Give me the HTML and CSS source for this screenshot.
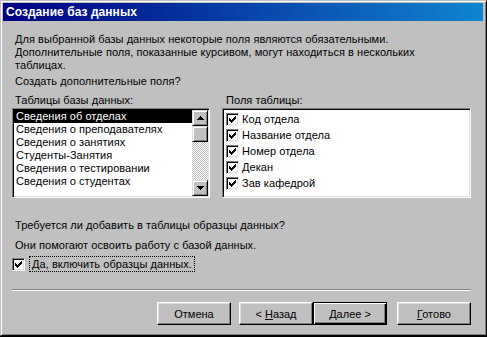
FILE: index.html
```html
<!DOCTYPE html>
<html lang="ru">
<head>
  <meta charset="UTF-8" />
  <title>Создание баз данных</title>
  <link rel="stylesheet" href="styles.css">
</head>
<body>
  <div class="window">
    <div class="titlebar">Создание баз данных</div>

    <div class="content">
      <p class="intro">Для выбранной базы данных некоторые поля являются обязательными.<br>Дополнительные поля, показанные курсивом, могут находиться в нескольких<br>таблицах.</p>
      <p class="question">Создать дополнительные поля?</p>

      <div class="lists">
        <div class="group tables">
          <div class="label">Таблицы базы данных:</div>
          <div class="listbox">
            <ul class="items">
              <li class="selected">Сведения об отделах</li>
              <li>Сведения о преподавателях</li>
              <li>Сведения о занятиях</li>
              <li>Студенты-Занятия</li>
              <li>Сведения о тестировании</li>
              <li>Сведения о студентах</li>
            </ul>
            <div class="scrollbar">
              <div class="sb-btn">
                <svg width="7" height="4" viewBox="0 0 7 4" shape-rendering="crispEdges"><path d="M3 0h1v1h-1z M2 1h3v1h-3z M1 2h5v1h-5z M0 3h7v1h-7z" fill="#000"/></svg>
              </div>
              <div class="sb-thumb"></div>
              <div class="sb-track"></div>
              <div class="sb-btn">
                <svg width="7" height="4" viewBox="0 0 7 4" shape-rendering="crispEdges"><path d="M0 0h7v1h-7z M1 1h5v1h-5z M2 2h3v1h-3z M3 3h1v1h-1z" fill="#000"/></svg>
              </div>
            </div>
          </div>
        </div>

        <div class="group fields">
          <div class="label">Поля таблицы:</div>
          <div class="listbox">
            <div class="check-row"><span class="check"><svg width="7" height="7" viewBox="0 0 7 7" shape-rendering="crispEdges"><path d="M6 0h1v1h-1z M5 1h2v1h-2z M0 2h1v1h-1z M4 2h3v1h-3z M0 3h2v1h-2z M3 3h3v1h-3z M0 4h5v1h-5z M1 5h3v1h-3z M2 6h1v1h-1z" fill="#000"/></svg></span>Код отдела</div>
            <div class="check-row"><span class="check"><svg width="7" height="7" viewBox="0 0 7 7" shape-rendering="crispEdges"><path d="M6 0h1v1h-1z M5 1h2v1h-2z M0 2h1v1h-1z M4 2h3v1h-3z M0 3h2v1h-2z M3 3h3v1h-3z M0 4h5v1h-5z M1 5h3v1h-3z M2 6h1v1h-1z" fill="#000"/></svg></span>Название отдела</div>
            <div class="check-row"><span class="check"><svg width="7" height="7" viewBox="0 0 7 7" shape-rendering="crispEdges"><path d="M6 0h1v1h-1z M5 1h2v1h-2z M0 2h1v1h-1z M4 2h3v1h-3z M0 3h2v1h-2z M3 3h3v1h-3z M0 4h5v1h-5z M1 5h3v1h-3z M2 6h1v1h-1z" fill="#000"/></svg></span>Номер отдела</div>
            <div class="check-row"><span class="check"><svg width="7" height="7" viewBox="0 0 7 7" shape-rendering="crispEdges"><path d="M6 0h1v1h-1z M5 1h2v1h-2z M0 2h1v1h-1z M4 2h3v1h-3z M0 3h2v1h-2z M3 3h3v1h-3z M0 4h5v1h-5z M1 5h3v1h-3z M2 6h1v1h-1z" fill="#000"/></svg></span>Декан</div>
            <div class="check-row"><span class="check"><svg width="7" height="7" viewBox="0 0 7 7" shape-rendering="crispEdges"><path d="M6 0h1v1h-1z M5 1h2v1h-2z M0 2h1v1h-1z M4 2h3v1h-3z M0 3h2v1h-2z M3 3h3v1h-3z M0 4h5v1h-5z M1 5h3v1h-3z M2 6h1v1h-1z" fill="#000"/></svg></span>Зав кафедрой</div>
          </div>
        </div>
      </div>

      <p class="sample-q">Требуется ли добавить в таблицы образцы данных?</p>
      <p class="sample-note">Они помогают освоить работу с базой данных.</p>
      <div class="sample-row">
        <span class="check"><svg width="7" height="7" viewBox="0 0 7 7" shape-rendering="crispEdges"><path d="M6 0h1v1h-1z M5 1h2v1h-2z M0 2h1v1h-1z M4 2h3v1h-3z M0 3h2v1h-2z M3 3h3v1h-3z M0 4h5v1h-5z M1 5h3v1h-3z M2 6h1v1h-1z" fill="#000"/></svg></span>
        <span class="focus">Да, включить образцы данных.</span>
      </div>

      <div class="separator"></div>

      <div class="buttons">
        <button class="btn cancel">Отмена</button>
        <button class="btn">&lt; <u>Н</u>азад</button>
        <button class="btn default"><u>Д</u>алее &gt;</button>
        <button class="btn finish"><u>Г</u>отово</button>
      </div>
    </div>
  </div>
</body>
</html>
```

FILE: styles.css
```css
body {
  margin: 0;
  background: #000;
  font-family: 'Liberation Sans', Arial, sans-serif;
  font-size: 11px;
  line-height: 13px;
  letter-spacing: 0.05px;
  color: #000;
}
.window {
  box-sizing: border-box;
  width: 487px;
  height: 336px;
  background: #c0c0c0;
  border: 1px solid;
  border-color: #c0c0c0 #000 #000 #c0c0c0;
  box-shadow: inset 1px 1px #fff, inset -1px -1px #808080;
  padding: 2px 3px 0 2px;
}
.titlebar {
  height: 18px;
  line-height: 18px;
  padding-left: 3px;
  background: linear-gradient(90deg, #000080, #1084d0);
  color: #fff;
  font-weight: bold;
  font-size: 12px;
}
.content {
  padding: 0 12px 0 9px;
}
p {
  margin: 0;
  padding-left: 3px;
}
.intro {
  margin-top: 12px;
}
.question {
  margin-top: 3px;
}

/* two lists */
.lists {
  display: flex;
  gap: 12px;
  margin-top: 6px;
}
.label {
  padding-left: 3px;
  margin-bottom: 1px;
}
.tables {
  width: 198px;
}
.fields {
  flex: 1;
}
.fields .label {
  padding-left: 4px;
}
.listbox {
  box-sizing: border-box;
  height: 90px;
  background: #fff;
  border: 1px solid;
  border-color: #808080 #fff #fff #808080;
  box-shadow: inset 1px 1px #000, inset -1px -1px #dfdfdf;
  padding: 1px;
}
.tables .listbox {
  display: flex;
}
.items {
  list-style: none;
  margin: 0;
  padding: 0;
  flex: 1;
}
.items li {
  height: 13px;
  padding-left: 2px;
}
.items li.selected {
  background: #000;
  color: #fff;
}
.scrollbar {
  width: 16px;
  display: flex;
  flex-direction: column;
}
.sb-btn, .sb-thumb {
  box-sizing: border-box;
  width: 16px;
  height: 16px;
  background: #c0c0c0;
  border: 1px solid;
  border-color: #dfdfdf #000 #000 #dfdfdf;
  box-shadow: inset 1px 1px #fff, inset -1px -1px #808080;
  display: flex;
  align-items: center;
  justify-content: center;
}
.sb-btn svg {
  display: block;
}
.sb-track {
  flex: 1;
  background: repeating-conic-gradient(#fff 0 25%, #c0c0c0 0 50%) 0 0 / 2px 2px;
}

/* checkboxes */
.check {
  box-sizing: border-box;
  width: 13px;
  height: 13px;
  flex: none;
  background: #fff;
  border: 1px solid;
  border-color: #808080 #fff #fff #808080;
  box-shadow: inset 1px 1px #000, inset -1px -1px #dfdfdf;
  padding: 2px 0 0 2px;
}
.check svg {
  display: block;
}
.fields .listbox {
  padding: 2px 2px 0 2px;
}
.check-row {
  display: flex;
  align-items: center;
  gap: 3px;
  height: 16px;
  padding-left: 1px;
}

/* sample data */
.sample-q {
  margin-top: 21px;
}
.sample-note {
  margin-top: 7px;
}
.sample-row {
  display: flex;
  align-items: center;
  gap: 4px;
  margin-top: 4px;
  height: 16px;
}
.focus {
  border: 1px dotted #000;
  padding: 1px 2px;
  line-height: 12px;
}
.separator {
  margin-top: 17px;
  border-top: 1px solid #808080;
  border-bottom: 1px solid #fff;
}

/* buttons */
.buttons {
  display: flex;
  justify-content: flex-end;
  margin-top: 11px;
}
.btn {
  box-sizing: border-box;
  width: 74px;
  height: 23px;
  padding: 0;
  font-family: 'Liberation Sans', Arial, sans-serif;
  font-size: 11px;
  color: #000;
  background: #c0c0c0;
  border: 1px solid;
  border-color: #fff #000 #000 #fff;
  box-shadow: inset -1px -1px #808080, inset 1px 1px #dfdfdf;
}
.btn.cancel {
  margin-right: 8px;
}
.btn.default {
  border-color: #000;
  box-shadow: inset 1px 1px #fff, inset -1px -1px #000, inset -2px -2px #808080;
}
.btn.finish {
  margin-left: 10px;
}
```
